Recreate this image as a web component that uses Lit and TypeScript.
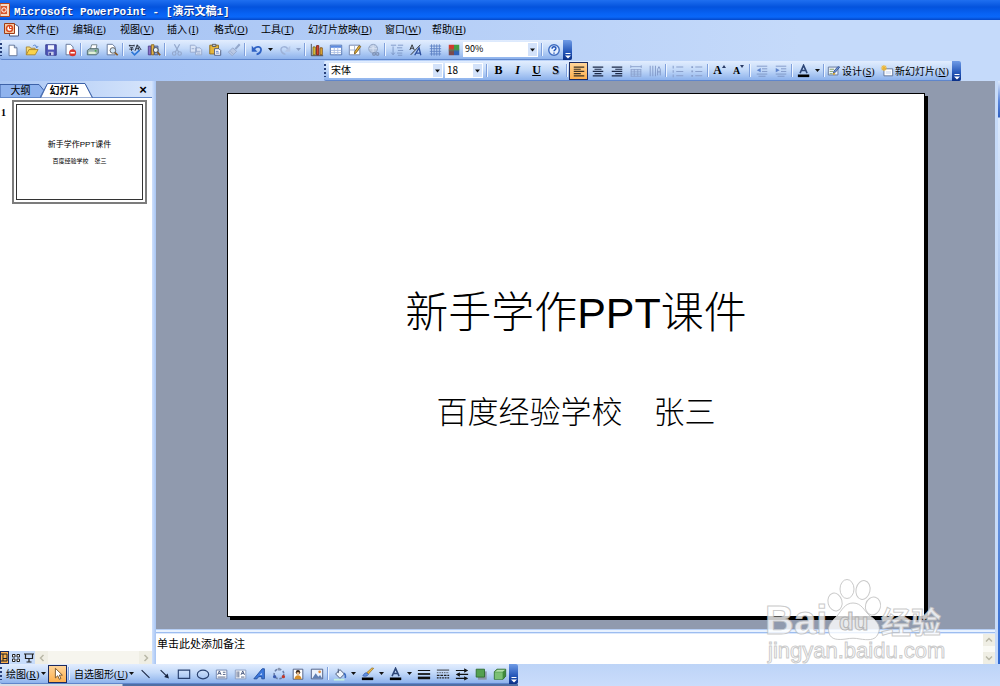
import { LitElement, html, css, svg } from "lit";
import { customElement, state } from "lit/decorators.js";
import { classMap } from "lit/directives/class-map.js";

const icons: Record<string, unknown> = {
  new: svg`<path d="M3.5 2.5h6l3 3v9h-9z" fill="#fff" stroke="#5b6f92"/><path d="M9.5 2.5v3h3" fill="#cfdcf2" stroke="#5b6f92"/>`,
  open: svg`<path d="M1.5 13.500v-9h4l1 1.500h5v2" fill="#f7dc7a" stroke="#a8842a"/><path d="M1.500 13.500l3-6h10.500l-3.500 6z" fill="#fbd34a" stroke="#a8842a"/><path d="M9 3.500c2-2 4-1 4.500 1.500M12 4l1.500 1.500L15 3.500" fill="none" stroke="#4a78c8"/>`,
  save: svg`<path d="M2 2h12v12H3l-1-1z" fill="#4f56b8" stroke="#34398c"/><path d="M4.500 2.500h7v5h-7z" fill="#eef2fc"/><path d="M5 10h6v4H5z" fill="#c9cfe9"/><path d="M6 11h2v3H6z" fill="#34398c"/>`,
  perm: svg`<path d="M3.500 1.500h5l3 3v9h-8z" fill="#fff" stroke="#5b6f92"/><circle cx="11" cy="11" r="4" fill="#d9362b"/><path d="M8.500 10.200h5v1.800h-5z" fill="#fff"/>`,
  print: svg`<path d="M5 7l1.500-5h6L11.500 7z" fill="#fff" stroke="#6c7a80"/><path d="M1.500 8.500l2.500-2h10v5l-2 2H1.500z" fill="#9db5b4" stroke="#4c6668"/><path d="M3 10h8v2.500H3z" fill="#e4f3d6"/><path d="M10 9h2" stroke="#3aa33a" stroke-width="1.500"/>`,
  preview: svg`<path d="M2.500 1.500h6l3 3v9h-9z" fill="#fff" stroke="#5b6f92"/><circle cx="9" cy="8.500" r="3.200" fill="#cfe4f7" stroke="#555"/><path d="M11.500 11l3 3" stroke="#8a5a20" stroke-width="2"/>`,
  spell: svg`<path d="M1 3h6M2 2v2M7 2v2M2.500 5h3L4 6.500V9M1.500 7h5M8 9l2.500-7L13 9M9 6.500h3M12 3l3 5" fill="none" stroke="#1c2230"/><path d="M4 10l3.500 3.500L13 8.500" fill="none" stroke="#2f78d8" stroke-width="2"/>`,
  research: svg`<path d="M1.500 3.500h3v10h-3z" fill="#8a72c8" stroke="#4d3c88"/><path d="M5 2h3v11.500H5z" fill="#e6b64c" stroke="#87651c"/><path d="M8.500 3.500h4v10h-4z" fill="#8fa6d8" stroke="#45598c"/><circle cx="10" cy="8" r="2.800" fill="#e7f2fb" stroke="#444"/><path d="M12 10.500l3 3.500" stroke="#8a5a20" stroke-width="2"/>`,
  cut: svg`<path d="M5 1.500l5 9M11 1.500l-5 9" stroke="#93a7cb" stroke-width="1.400"/><circle cx="4.800" cy="12" r="2" fill="none" stroke="#93a7cb" stroke-width="1.300"/><circle cx="11" cy="12" r="2" fill="none" stroke="#93a7cb" stroke-width="1.300"/>`,
  copy: svg`<path d="M1.500 2.500h5l2 2v6h-7zM7.500 5.500h5l2 2v6h-7z" fill="#d8e3f6" stroke="#93a7cb"/><path d="M9 9.500h4M9 11.500h4M3 6.500h3" stroke="#93a7cb"/>`,
  paste: svg`<path d="M2 2.500h10v10H2z" fill="#e5b53c" stroke="#8b6a1c"/><path d="M5 1.500h4v2.500H5z" fill="#bcc4d6" stroke="#555"/><path d="M7.500 6.500h5l2 2v5.500h-7z" fill="#fff" stroke="#44547c"/><path d="M9 9.500h3M9 11.500h4" stroke="#4a6cb8"/>`,
  brush: svg`<path d="M14.500 1.500L9.500 7" stroke="#93a7cb" stroke-width="2.400"/><path d="M6.500 5.500l4.500 4-5 5-4.500-4z" fill="#b9c8e4" stroke="#93a7cb"/><path d="M4 9.500l3 3" stroke="#93a7cb"/>`,
  undo: svg`<path d="M4.500 7.500C7 2.500 13.500 4 12.500 8.500c-.5 2.500-2.500 4-5 4.500" fill="none" stroke="#2f62c4" stroke-width="2"/><path d="M2 3v7h6.500z" fill="#2f62c4"/>`,
  redo: svg`<path d="M11.500 7.500C9 2.500 2.500 4 3.500 8.500c.5 2.500 2.500 4 5 4.500" fill="none" stroke="#9db2d8" stroke-width="1.700"/><path d="M14 3v7H7.500z" fill="#b4c6e6"/>`,
  chart: svg`<path d="M1.500 1v13.500H15" fill="none" stroke="#444"/><path d="M3.500 4.500h2.500v9H3.500z" fill="#f3cf3c" stroke="#7c6412"/><path d="M7.500 3h2.500v10.500H7.500z" fill="#d8472f" stroke="#7a1c10"/><path d="M11.500 5.500h2.500v8h-2.500z" fill="#f0b93c" stroke="#7c4c12"/>`,
  table: svg`<path d="M1.500 2.500h13v11h-13z" fill="#fff" stroke="#4468ac"/><path d="M2 3h12v2.500H2z" fill="#5d8be0"/><path d="M2 8.500h12M2 11h12M6 5v8M10 5v8" stroke="#a9bde2"/>`,
  tables: svg`<path d="M1.500 2.500h12v11h-12z" fill="#fff" stroke="#6a7ea8"/><path d="M2 8h11M7.500 3v10" stroke="#9aaccf"/><path d="M14.500 4L9.500 11l-2 1.500.3-2.500L12.500 3z" fill="#f0b93c" stroke="#7c5a14"/>`,
  link: svg`<circle cx="7" cy="6.500" r="5" fill="#b7c6de" stroke="#8c9fc0"/><path d="M2.500 6.500h9M7 2v9M4 3.500c2 2 4 2 6 0" fill="none" stroke="#dbe5f5"/><path d="M6.500 12.500c0-2 3-2 3.500 0s3.500 2 3.500 0-3-2-3.500 0-3.500 2-3.500 0z" fill="none" stroke="#7f92b4" stroke-width="1.500"/>`,
  expand: svg`<path d="M1 2.500h6M9 2.500h6M3.500 4v9M1.500 11l2 2.500 2-2.500M8 5.500h6M9 8.500h6M8 11.500h6M9 14h5" fill="none" stroke="#7a93c4"/>`,
  showfmt: svg`<path d="M1 8l2.500-6L6 8M2 6h3" fill="none" stroke="#222"/><path d="M2 13.500L13 2" stroke="#222"/><path d="M6.500 14l5-8.500L13.500 14M8.500 11.500h4.500" fill="none" stroke="#2d4f9e" stroke-width="1.500"/>`,
  grid: svg`<path d="M2 3.500h13M2 6.500h13M2 9.500h13M2 12.500h13M4 1.500v13M7 1.500v13M10 1.500v13M13 1.500v13" stroke="#5d80c4"/>`,
  color: svg`<path d="M2 2h6v6H2z" fill="#d03a2c"/><path d="M8 2h6v6H8z" fill="#3f9e44"/><path d="M2 8h6v6H2z" fill="#7c4a4c"/><path d="M8 8h6v6H8z" fill="#2f62b8"/><path d="M2 6.500h12v3H2z" fill="#4e8c5c" opacity=".5"/>`,
  help: svg`<circle cx="8" cy="8" r="6" fill="#e9f2ff" stroke="#3f6cc0" stroke-width="1.600"/><path d="M5.800 6.500c0-3 4.400-3 4.400-.3 0 1.600-2.200 1.600-2.200 3.300M8 10.800v1.600" fill="none" stroke="#1f52b8" stroke-width="1.600"/>`,
  left: svg`<path d="M2 3.500h12M2 6h8M2 8.500h12M2 11h8M2 13.500h12" stroke="#3b3226" stroke-width="1.300"/>`,
  center: svg`<path d="M2 3.500h12M4 6h8M2 8.500h12M4 11h8M2 13.500h12" stroke="#1d2a48" stroke-width="1.300"/>`,
  right: svg`<path d="M2 3.500h12M6 6h8M2 8.500h12M6 11h8M2 13.500h12" stroke="#1d2a48" stroke-width="1.300"/>`,
  dist: svg`<path d="M2 1.500v3M14 1.500v3M2 3h12M2 6.500h12M2 9h12M2 11.500h12M2 14h12M2.500 6v8M6 6v8M10 6v8M13.500 6v8" stroke="#8aa0cc"/>`,
  vert: svg`<path d="M2.500 2v12M5.500 2v12M8.500 2v12M11 13V6l1.500-3L14 6v7M11 9h3" fill="none" stroke="#7d94c4"/>`,
  num: svg`<path d="M2.500 2v3M2.500 7v3M2.500 12v3M6 3.500h8M6 8.500h8M6 13.500h8" stroke="#8aa0cc" stroke-width="1.200"/>`,
  bul: svg`<path d="M1.500 3.500h2M1.500 8.500h2M1.500 13.500h2" stroke="#8aa0cc" stroke-width="2"/><path d="M6 3.500h8M6 8.500h8M6 13.500h8" stroke="#8aa0cc" stroke-width="1.200"/>`,
  outd: svg`<path d="M2 2.500h12M8 5.500h6M8 8.500h6M2 11.500h12M4 14h8" stroke="#7d94c4"/><path d="M6.500 4.500v5L2 7z" fill="#5f84cc"/>`,
  ind: svg`<path d="M2 2.500h12M8 5.500h6M8 8.500h6M2 11.500h12M4 14h8" stroke="#7d94c4"/><path d="M2 4.500v5L6.500 7z" fill="#5f84cc"/>`,
  design: svg`<path d="M1.500 3.500h11v9h-11z" fill="#eef4fd" stroke="#5b6f92"/><path d="M3 6h5M3 8.500h4M3 11h3" stroke="#7d9a5c"/><path d="M14.500 3.500l-5 6-2.500 2 1-3.500 4.500-5z" fill="#6f96dc" stroke="#32508c"/><path d="M7 12l2-1.500" stroke="#d8a42c" stroke-width="2"/>`,
  newslide: svg`<path d="M4.500 5.500h10v8h-10z" fill="#fff" stroke="#5b6f92"/><path d="M6.500 8h6v3.500h-6z" fill="#dfe8f8"/><path d="M4.500 1v7M1 4.500h7M2 2l5 5M7 2L2 7" stroke="#f0b52c" stroke-width="1.200"/>`,
  pointer: svg`<path d="M5 1.500v11l2.700-2.500 1.800 4 1.800-.8-1.800-3.900H13z" fill="#fff" stroke="#6b4a22"/>`,
  line: svg`<path d="M3 3.500l9 9" stroke="#16233f" stroke-width="1.200"/>`,
  arrow: svg`<path d="M3 3.500l7 7" stroke="#16233f" stroke-width="1.200"/><path d="M12.500 13L7 11.500l4-4z" fill="#16233f"/>`,
  rect: svg`<path d="M1.500 3.500h13v9.500h-13z" fill="none" stroke="#28406e" stroke-width="1.300"/>`,
  oval: svg`<ellipse cx="8" cy="8.500" rx="6.500" ry="5" fill="none" stroke="#28406e" stroke-width="1.300"/>`,
  tbox: svg`<path d="M1.500 3.500h12v10h-12z" fill="#fff" stroke="#6a7ea8"/><path d="M3 9l2-4.500L7 9M3.800 7.500h2.500M9 6h3M9 8.500h3M3 11.500h9" fill="none" stroke="#44547c"/>`,
  vbox: svg`<path d="M1.500 3.500h12v10h-12z" fill="#fff" stroke="#8496bb"/><path d="M8 9l2-4.500L12 9M8.800 7.500h2.500M3.500 5v7M5.500 5v7M8 11.500h4" fill="none" stroke="#44547c"/>`,
  wordart: svg`<path d="M1 13.500L10.500 2h2.500v11.500h-3V11H6.500l-2 2.500z" fill="#3c78dc" stroke="#1f4c9c"/><path d="M8 9l2-2.500V9z" fill="#cfe0fa"/>`,
  diagram: svg`<circle cx="8" cy="8" r="5.500" fill="none" stroke="#6a7ea8" stroke-width="1.800" stroke-dasharray="3 2"/><circle cx="8" cy="2.500" r="1.700" fill="#8896b0"/><circle cx="3" cy="11" r="1.900" fill="#3c5cae"/><circle cx="13" cy="11" r="1.900" fill="#c0392b"/>`,
  clip: svg`<path d="M2.500 2.500h11v11.500h-11z" fill="#fff" stroke="#44547c"/><circle cx="8" cy="6" r="2.500" fill="#3c2a1c"/><path d="M4 14c0-6 8-6 8 0z" fill="#d8902c"/><path d="M6.500 6h3v2.500h-3z" fill="#f4c48c"/>`,
  image: svg`<path d="M1.500 2.500h13v11h-13z" fill="#eaf2fd" stroke="#44547c"/><path d="M2.500 13l4-6 3 4 2-2 2.500 4z" fill="#5f7fb4"/><circle cx="11" cy="5.500" r="1.500" fill="#e08a3c"/>`,
  fill: svg`<path d="M3 8l5-5 5 5-5 5z" fill="#eef4fc" stroke="#3c4c6c"/><path d="M6 2v5" stroke="#3c4c6c"/><path d="M12.500 7c2 1.500 2 3.500 1.500 5.500" fill="none" stroke="#3c6cc0" stroke-width="1.800"/><path d="M1 13.500h12v2H1z" fill="#c5f0dc"/>`,
  pen: svg`<path d="M14.500 1.500L8.500 8 6.500 6.500 12.500 1z" fill="#f0b93c" stroke="#7c5a14" stroke-width=".7"/><path d="M2 10c2-3 3-4 5-3l1.500 1.500C7 11 4 11 2 10z" fill="#5f8fe0" stroke="#2d4f9e" stroke-width=".7"/><path d="M1 12h13v3H1z" fill="#000"/>`,
  fontcolor: svg`<path d="M3.500 10.500L7.500 1.500l4 9M5 7.500h5" fill="none" stroke="#2d4677" stroke-width="1.800"/><path d="M1 12h13v3H1z" fill="#000"/>`,
  lines: svg`<path d="M1 4h14" stroke="#111" stroke-width="1.200"/><path d="M1 8h14" stroke="#111" stroke-width="2"/><path d="M1 12.500h14" stroke="#111" stroke-width="3"/>`,
  dashes: svg`<path d="M1 3.500h14" stroke="#222"/><path d="M1 6.500h14" stroke="#222" stroke-dasharray="1 1"/><path d="M1 9.500h14" stroke="#222" stroke-width="1.500" stroke-dasharray="3 1"/><path d="M1 12.500h14" stroke="#222" stroke-width="1.500" stroke-dasharray="2 1"/>`,
  arrows: svg`<path d="M1 4h13M2 8.500h13M1 13h13" stroke="#111" stroke-width="1.300"/><path d="M10.500 1.500L15 4l-4.500 2.500zM5.500 6L1 8.500 5.500 11zM10.500 10.500L15 13l-4.500 2.500z" fill="#111"/>`,
  shadow: svg`<path d="M4.500 5h10v9.500h-10z" fill="#8a96a8"/><path d="M2.500 2.500h9.500v9H2.500z" fill="#54a050" stroke="#2d6c2c"/>`,
  cube: svg`<path d="M1.500 5.500l3-3h10v8l-3 3.500h-10z" fill="#3f8a3c" stroke="#2d6c2c"/><path d="M2 6h9v8H2z" fill="#7cc074"/><path d="M2 5.500l3-2.500h9L11 5.500z" fill="#b4e0a8"/>`,
};

const icon = (name: string) =>
  html`<svg viewBox="0 0 16 16" width="14" height="14" aria-hidden="true">${icons[name]}</svg>`;

const key = (letter: string) => html`<span class="key">(<u>${letter}</u>)</span>`;

const shared = css`
  * {
    box-sizing: border-box;
  }
  button,
  select,
  textarea {
    font: inherit;
    color: inherit;
    border: 0;
    padding: 0;
    margin: 0;
    background: none;
    border-radius: 0;
  }
  .key {
    display: inline-block;
    width: 13px;
    text-align: center;
    font: 10px "Liberation Serif", serif;
  }
`;

/** A docked tool bar: grip, slotted-in items, and the overflow cap at its end. */
@customElement("tool-bar")
class ToolBar extends LitElement {
  static styles = [
    shared,
    css`
      :host {
        display: flex;
        height: 20px;
        width: max-content;
        align-items: center;
        background: linear-gradient(#e2edfe, #c4daf9 45%, #8db2ec);
        border-bottom: 1px solid #5f86cc;
        border-radius: 2px;
      }
      .grip {
        width: 3px;
        height: 13px;
        flex: none;
        background: repeating-linear-gradient(#27407a 0 2px, transparent 2px 4px);
        background-size: 2px 100%;
        background-repeat: no-repeat;
      }
      .cap {
        display: flex;
        align-items: flex-end;
        justify-content: center;
        width: 9px;
        height: 20px;
        flex: none;
        background: linear-gradient(#6f9be6, #2456b8 60%, #0a2f86);
        border-radius: 0 2px 2px 0;
      }
    `,
  ];
  render() {
    return html`<span class="grip"></span><slot></slot>
      <button class="cap" aria-label="工具栏选项">
        <svg viewBox="0 0 8 8" width="8" height="8" aria-hidden="true">
          <path d="M1.500 1.500h5" stroke="#fff" />
          <path d="M1 3.500h6L4 6.500z" fill="#fff" />
        </svg>
      </button>`;
  }
}

@customElement("app-root")
class AppRoot extends LitElement {
  @state() tab = "slides";

  static styles = [
    shared,
    css`
      :host {
        display: flex;
        flex-direction: column;
        height: 100vh;
        min-height: 400px;
        position: relative;
        overflow: hidden;
        font: 10px "Noto Sans CJK SC", sans-serif;
        color: #000;
        background: linear-gradient(90deg, #a3c1f3, #c5dafa 80%);
      }
      .titlebar {
        display: flex;
        align-items: center;
        gap: 4px;
        height: 20px;
        flex: none;
        background: linear-gradient(#1f6ff0, #0453dd 35%, #0763f5 70%, #0a67f8 85%, #0347c8);
        color: #fff;
        font: bold 11px "Liberation Mono", "Noto Sans CJK SC", monospace;
        text-shadow: 1px 1px 0 #0b348f;
        white-space: pre;
      }
      .titlebar h1 {
        font: inherit;
        margin: 0;
      }
      .menubar {
        display: flex;
        align-items: center;
        gap: 14px;
        height: 20px;
        flex: none;
        padding: 0 0 2px 4px;
        line-height: 16px;
      }
      .menubar svg {
        margin-right: -7px;
      }
      .menubar button,
      tool-bar button {
        white-space: nowrap;
      }
      .row {
        display: flex;
        flex: none;
        height: 21px;
      }
      .format {
        height: 20px;
        padding-left: 324px;
      }
      .tool {
        display: flex;
        align-items: center;
        justify-content: center;
        width: 19px;
        height: 18px;
        flex: none;
      }
      .tool.on {
        background: linear-gradient(#ffd59a, #fdb04e);
        border: 1px solid #1c2a5e;
      }
      .tool.letter {
        font: bold 12px "Liberation Serif", serif;
      }
      .tool.italic {
        font-style: italic;
      }
      .tool.under {
        text-decoration: underline;
      }
      .tool.shade {
        text-shadow: 1px 1px 0 #8798b8;
      }
      .tool.small {
        font-size: 10px;
      }
      .tool.letter svg {
        align-self: flex-start;
        margin-top: 3px;
      }
      .drop {
        display: flex;
        align-items: center;
        justify-content: center;
        width: 9px;
        height: 18px;
        flex: none;
      }
      .sep {
        width: 1px;
        height: 13px;
        margin: 0 2px 0 1px;
        flex: none;
        background: #7fa0dc;
        box-shadow: 1px 0 0 #eef5ff;
      }
      .combo {
        display: flex;
        position: relative;
        flex: none;
        height: 15px;
        margin: 0 2px 1px 0;
        background: #fff;
      }
      .combo select {
        appearance: none;
        width: 100%;
        padding-left: 2px;
        line-height: 14px;
        outline: none;
      }
      .combo svg {
        position: absolute;
        right: 1px;
        top: 1px;
        background: #d3e2fa;
        pointer-events: none;
      }
      .font {
        width: 114px;
        margin-left: 2px;
      }
      .size {
        width: 38px;
      }
      .zoom {
        width: 75px;
        font-size: 9px;
      }
      .labelled {
        display: flex;
        align-items: center;
        gap: 1px;
        height: 18px;
        padding: 0 4px 0 1px;
      }
      .work {
        display: flex;
        flex: 1;
        min-height: 0;
      }
      .side {
        display: flex;
        flex-direction: column;
        width: 152px;
        flex: none;
        background: #fff;
      }
      .tabs {
        display: flex;
        position: relative;
        align-items: center;
        height: 17px;
        flex: none;
        background: linear-gradient(90deg, #a9c6f4, #d5e4fb);
      }
      .tabs .shape {
        position: absolute;
        left: 0;
        top: 0;
      }
      .tabs button {
        position: relative;
        height: 16px;
        line-height: 16px;
        width: 44px;
        padding-right: 3px;
      }
      .tabs .current {
        font-weight: bold;
      }
      .tabs .close {
        width: 18px;
        padding: 0;
        margin-left: auto;
        font: bold 13px "Liberation Sans", sans-serif;
      }
      .thumbs {
        display: flex;
        align-items: flex-start;
        flex: 1;
        gap: 5px;
        margin: 0;
        padding: 2px 5px 0 1px;
        list-style: none;
      }
      .number {
        padding-top: 7px;
        width: 6px;
        font: bold 10px "Liberation Serif", serif;
      }
      .thumb {
        display: block;
        flex: 1;
        padding: 2px;
        border: 2px solid #7c7c7c;
        background: #fff;
      }
      .thumb .page {
        display: flex;
        flex-direction: column;
        align-items: center;
        aspect-ratio: 127 / 96;
        padding-top: 34px;
        gap: 5px;
        border: 1px solid #333;
      }
      .thumb .head {
        font: 8px/12px "Liberation Sans", "Noto Sans CJK SC", sans-serif;
      }
      .thumb .sub {
        font: 6px/10px "Noto Sans CJK SC", sans-serif;
        white-space: pre;
      }
      .views {
        display: flex;
        align-items: center;
        height: 13px;
        flex: none;
        background: #c7dcfb;
      }
      .views button {
        display: flex;
        align-items: center;
        justify-content: center;
        width: 13px;
        height: 13px;
      }
      .views .on {
        width: 9px;
        background: #fdb04e;
        border: 1px solid #1c2a5e;
      }
      .hscroll {
        display: flex;
        justify-content: space-between;
        flex: 1;
        background: #f6f5ee;
      }
      .split {
        width: 4px;
        flex: none;
        background: linear-gradient(90deg, #cfe1fd, #a7c4f2);
      }
      .main {
        display: flex;
        flex-direction: column;
        flex: 1;
        min-width: 0;
      }
      .stage {
        display: flex;
        flex: 1;
        min-height: 0;
        padding: 12px 70px 12px 71px;
        background: #909aae;
      }
      .slide {
        display: flex;
        flex-direction: column;
        align-items: center;
        justify-content: center;
        gap: 45px;
        flex: 1;
        padding-top: 4px;
        border: 1px solid #000;
        background: #fff;
        box-shadow: 3px 3px 0 #000;
      }
      .slide h2 {
        margin: 0;
        font: 300 43px/60px "Liberation Sans", "Noto Sans CJK SC", sans-serif;
        white-space: nowrap;
      }
      .slide p {
        margin: 0;
        font: 300 31px/44px "Noto Sans CJK SC", sans-serif;
        white-space: pre;
      }
      .hsplit {
        height: 5px;
        flex: none;
        background: linear-gradient(#b5cef5 0 1px, #e8f2ff 1px 3px, #9dbdf0 3px 4px, #dbe8fc 4px);
      }
      .notes {
        display: flex;
        height: 30px;
        flex: none;
        background: #fff;
      }
      .notes textarea {
        flex: 1;
        resize: none;
        outline: none;
        overflow: hidden;
        padding: 1px;
        font-size: 11px;
        line-height: 16px;
      }
      .notes textarea::placeholder {
        color: #000;
        opacity: 1;
      }
      .vscroll {
        display: flex;
        flex-direction: column;
        justify-content: space-between;
        width: 12px;
        background: #fafaf5;
      }
      .nub {
        display: flex;
        align-items: center;
        justify-content: center;
        width: 12px;
        height: 12px;
        background: #efeee4;
      }
      .edge {
        width: 5px;
        flex: none;
        border-left: 3px solid #c7dbf9;
        background: linear-gradient(#dce9fc, #5a86dc 20px, #2f5fc0 36px, #dce9fc 37px, #8fb2ea 320px, #2f68d0);
      }
      .bottom {
        display: flex;
        flex-direction: column;
        flex: none;
        height: 22px;
        background: linear-gradient(#bdd4f7, #cadcfb);
      }
      .bottom .text {
        padding: 0 0 0 3px;
      }
      .task {
        width: 518px;
        height: 2px;
        background: linear-gradient(90deg, #d8dce4 122px, #4f6fa4 123px);
      }
      .mark {
        position: absolute;
        right: 53px;
        bottom: 20px;
        pointer-events: none;
      }
      .mark text,
      .mark .paw {
        fill: #fff;
        fill-opacity: 0.8;
        stroke: #bdbdbd;
        stroke-opacity: 0.8;
        stroke-width: 1px;
      }
      .mark .toes {
        fill-opacity: 0.3;
      }
      .mark .latin {
        font: bold 40px "Liberation Sans", sans-serif;
      }
      .mark .du {
        font: bold 24px "Liberation Sans", sans-serif;
        fill: #e4e4e4;
        stroke: #a8a8a8;
      }
      .mark .cjk {
        font: bold 30px "Noto Sans CJK SC", sans-serif;
      }
      .mark .url {
        font: 22px "Liberation Sans", sans-serif;
      }
    `,
  ];

  tool(name: string, label: string, on = false) {
    return html`<button class=${classMap({ tool: true, on })} aria-label=${label}>${icon(name)}</button>`;
  }

  tools(list: string[][]) {
    return list.map(([name, label]) => this.tool(name, label));
  }

  drop(label: string, color = "#111") {
    return html`<button class="drop" aria-label=${label}>
      <svg viewBox="0 0 5 3" width="5" height="3" aria-hidden="true"><path d="M0 0h5L2.500 3z" fill=${color} /></svg>
    </button>`;
  }

  tick(d: string) {
    return html`<svg viewBox="0 0 4 3" width="4" height="3" aria-hidden="true"><path d=${d} fill="#2a3c66" /></svg>`;
  }

  sep() {
    return html`<span class="sep"></span>`;
  }

  combo(kind: string, label: string, value: string) {
    return html`<span class="combo ${kind}">
      <select aria-label=${label}><option>${value}</option></select>
      <svg viewBox="0 0 9 13" width="9" height="13" aria-hidden="true"><path d="M2 5.500h5L4.500 8.500z" fill="#111" /></svg>
    </span>`;
  }

  nub(label: string, d: string) {
    return html`<button class="nub" aria-label=${label}>
      <svg viewBox="0 0 8 8" width="8" height="8" aria-hidden="true">
        <path d=${d} fill="none" stroke="#b9b8a8" stroke-width="1.500" />
      </svg>
    </button>`;
  }

  render() {
    const menus = [
      ["文件", "F"],
      ["编辑", "E"],
      ["视图", "V"],
      ["插入", "I"],
      ["格式", "O"],
      ["工具", "T"],
      ["幻灯片放映", "D"],
      ["窗口", "W"],
      ["帮助", "H"],
    ];
    return html`
      <header class="titlebar">
        <svg viewBox="0 0 10 14" width="10" height="14" aria-hidden="true">
          <path d="M0 .5h9.500v13H0z" fill="#f3d9c4" stroke="#b4441c" />
          <path d="M1 3h6v8H1z" fill="#d8562c" />
          <circle cx="4" cy="7" r="2.200" fill="none" stroke="#fff" />
        </svg>
        <h1>Microsoft PowerPoint - [演示文稿1]</h1>
      </header>

      <nav class="menubar" aria-label="菜单">
        <svg viewBox="0 0 15 15" width="15" height="15" aria-hidden="true">
          <path d="M5.500 2.500h6l3 2v9.500h-9z" fill="#fff" stroke="#44547c" />
          <path d="M.5 1.500h10v10H.5z" fill="#f3c9a4" stroke="#a03c14" />
          <circle cx="5.500" cy="6.500" r="3" fill="#fff" stroke="#d8461c" stroke-width="1.500" />
          <path d="M5.500 6.500v-3M5.500 6.500h3" stroke="#d8461c" />
        </svg>
        ${menus.map(([name, k]) => html`<button>${name}${key(k)}</button>`)}
      </nav>

      <div class="row">
        <tool-bar role="toolbar" aria-label="常用">
          ${this.tools([["new", "新建"], ["open", "打开"], ["save", "保存"], ["perm", "权限"]])} ${this.sep()}
          ${this.tools([["print", "打印"], ["preview", "打印预览"]])} ${this.sep()}
          ${this.tools([["spell", "拼写检查"], ["research", "信息检索"]])} ${this.sep()}
          ${this.tools([["cut", "剪切"], ["copy", "复制"], ["paste", "粘贴"], ["brush", "格式刷"]])} ${this.sep()}
          ${this.tool("undo", "撤消")}${this.drop("撤消列表")} ${this.tool("redo", "恢复")}${this.drop("恢复列表", "#8c9fc4")}
          ${this.sep()}
          ${this.tools([["chart", "插入图表"], ["table", "插入表格"], ["tables", "表格和边框"], ["link", "插入超链接"]])}
          ${this.sep()}
          ${this.tools([["expand", "全部展开"], ["showfmt", "显示格式"], ["grid", "显示网格"], ["color", "颜色/灰度"]])}
          ${this.combo("zoom", "显示比例", "90%")} ${this.sep()} ${this.tool("help", "帮助")}
        </tool-bar>
      </div>

      <div class="row format">
        <tool-bar role="toolbar" aria-label="格式">
          ${this.combo("font", "字体", "宋体")} ${this.combo("size", "字号", "18")} ${this.sep()}
          <button class="tool letter" aria-label="加粗">B</button>
          <button class="tool letter italic" aria-label="倾斜">I</button>
          <button class="tool letter under" aria-label="下划线">U</button>
          <button class="tool letter shade" aria-label="阴影">S</button>
          ${this.sep()} ${this.tool("left", "左对齐", true)}
          ${this.tools([["center", "居中"], ["right", "右对齐"], ["dist", "分散对齐"], ["vert", "更改文字方向"]])}
          ${this.sep()} ${this.tools([["num", "编号"], ["bul", "项目符号"]])} ${this.sep()}
          <button class="tool letter" aria-label="增大字号">A${this.tick("M0 3h4L2 0z")}</button>
          <button class="tool letter small" aria-label="减小字号">A${this.tick("M0 0h4L2 3z")}</button>
          ${this.sep()} ${this.tools([["outd", "减少缩进量"], ["ind", "增加缩进量"]])} ${this.sep()}
          ${this.tool("fontcolor", "字体颜色")}${this.drop("字体颜色列表")} ${this.sep()}
          <button class="labelled">${icon("design")}<span>设计${key("S")}</span></button>
          <button class="labelled">${icon("newslide")}<span>新幻灯片${key("N")}</span></button>
        </tool-bar>
      </div>

      <div class="work">
        <aside class="side">
          <div class="tabs" role="tablist">
            <svg class="shape" viewBox="0 0 152 17" width="152" height="17" aria-hidden="true">
              <path d="M0 3.500h39l5 6-4 7H0z" fill="#8fb3ee" stroke="#3d62a8" />
              <path d="M0 16.500h40l7-13h38.500l7 13H152" fill="none" stroke="#5f86c8" />
              <path d="M40.500 17L47.500 2.500h37.500l7.500 14.500z" fill="#fff" stroke="#3d62a8" />
            </svg>
            <button role="tab" aria-selected=${this.tab === "outline"} @click=${() => (this.tab = "outline")}>大纲</button>
            <button
              role="tab"
              class="current"
              aria-selected=${this.tab === "slides"}
              @click=${() => (this.tab = "slides")}
            >
              幻灯片
            </button>
            <button class="close" aria-label="关闭">×</button>
          </div>
          <ol class="thumbs">
            <li class="number">1</li>
            <li class="thumb">
              <div class="page">
                <span class="head">新手学作PPT课件</span>
                <span class="sub">百度经验学校　张三</span>
              </div>
            </li>
          </ol>
          <div class="views">
            <button class="on" aria-label="普通视图">
              <svg viewBox="0 0 7 9" width="7" height="9" aria-hidden="true">
                <path d="M0 1h6v7H0M2 1v7M2 5.500h4" fill="none" stroke="#222" />
              </svg>
            </button>
            <button aria-label="幻灯片浏览视图">
              <svg viewBox="0 0 10 10" width="10" height="10" aria-hidden="true">
                <path d="M1.500 1.500h2.500v2.500H1.500zM6 1.500h2.500v2.500H6zM1.500 6h2.500v2.500H1.500zM6 6h2.500v2.500H6z" fill="#fff" stroke="#222" />
              </svg>
            </button>
            <button aria-label="幻灯片放映">
              <svg viewBox="0 0 10 10" width="10" height="10" aria-hidden="true">
                <path d="M0 1h10M1.500 1v4.500h7V1M5 6v3M2.500 9h5" fill="none" stroke="#222" stroke-width="1.200" />
              </svg>
            </button>
            <div class="hscroll">
              ${this.nub("向左滚动", "M5.500 1L2.500 4l3 3")}${this.nub("向右滚动", "M2.500 1l3 3-3 3")}
            </div>
          </div>
        </aside>
        <div class="split"></div>
        <main class="main">
          <div class="stage">
            <section class="slide">
              <h2>新手学作PPT课件</h2>
              <p>百度经验学校　张三</p>
            </section>
          </div>
          <div class="hsplit"></div>
          <div class="notes">
            <textarea aria-label="备注" placeholder="单击此处添加备注"></textarea>
            <div class="vscroll">${this.nub("向上滚动", "M1 5.500L4 2.500l3 3")}${this.nub("向下滚动", "M1 2.500l3 3 3-3")}</div>
          </div>
        </main>
        <div class="edge"></div>
      </div>

      <footer class="bottom">
        <tool-bar role="toolbar" aria-label="绘图">
          <button class="text">绘图${key("R")}</button>
          ${this.drop("绘图菜单")} ${this.tool("pointer", "选择对象", true)} ${this.sep()}
          <button class="text">自选图形${key("U")}</button>
          ${this.drop("自选图形菜单")}
          ${this.tools([
            ["line", "直线"],
            ["arrow", "箭头"],
            ["rect", "矩形"],
            ["oval", "椭圆"],
            ["tbox", "文本框"],
            ["vbox", "竖排文本框"],
            ["wordart", "插入艺术字"],
            ["diagram", "插入组织结构图"],
            ["clip", "插入剪贴画"],
            ["image", "插入图片"],
          ])}
          ${this.sep()} ${this.tool("fill", "填充颜色")}${this.drop("填充颜色列表")}
          ${this.tool("pen", "线条颜色")}${this.drop("线条颜色列表")}
          ${this.tool("fontcolor", "字体颜色")}${this.drop("字体颜色列表")}
          ${this.tools([
            ["lines", "线型"],
            ["dashes", "虚线线型"],
            ["arrows", "箭头样式"],
            ["shadow", "阴影样式"],
            ["cube", "三维效果样式"],
          ])}
        </tool-bar>
        <div class="task"></div>
      </footer>

      <svg class="mark" viewBox="0 0 182 90" width="182" height="90" aria-hidden="true">
        <g class="paw toes">
          <ellipse cx="70" cy="26" rx="7" ry="9" transform="rotate(-15 70 26)" />
          <ellipse cx="82" cy="13" rx="7" ry="9.500" />
          <ellipse cx="98" cy="14" rx="7" ry="9.500" transform="rotate(12 98 14)" />
          <ellipse cx="108" cy="30" rx="7.500" ry="9" transform="rotate(15 108 30)" />
        </g>
        <path
          class="paw"
          d="M88 27c9 0 11 8 17 13 9 6 11 12 8 18-3 7-11 6-18 5-5-1-9-1-14 0-8 1-15 1-17-6-2-8 3-12 8-17 5-6 8-13 16-13z"
        />
        <text class="latin" x="0" y="58">Bai</text>
        <text class="du" x="74" y="54">du</text>
        <text class="cjk" x="116" y="57">经验</text>
        <text class="url" x="3" y="82">jingyan.baidu.com</text>
      </svg>
    `;
  }
}
